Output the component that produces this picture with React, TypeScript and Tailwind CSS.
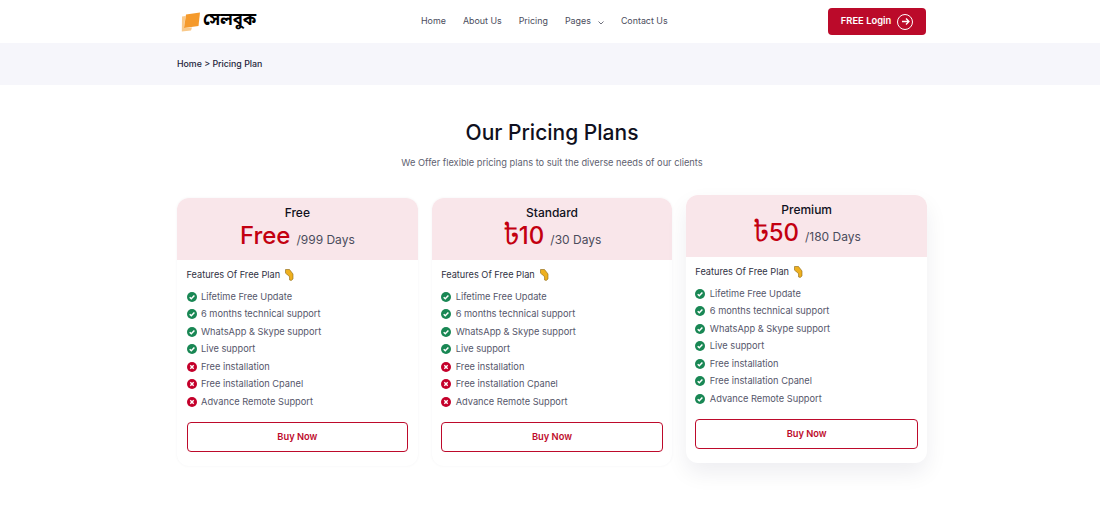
import React from "react";

const Check = ({ ok }: { ok: boolean }) => (
  <svg width="10" height="10" viewBox="0 0 10 10" className="shrink-0">
    <circle cx="5" cy="5" r="5" fill={ok ? "#198754" : "#c4002b"} />
    {ok ? (
      <path d="M2.7 5.2 4.3 6.8 7.4 3.6" fill="none" stroke="#fff" strokeWidth="1.5" />
    ) : (
      <path d="M3.3 3.3 6.7 6.7M6.7 3.3 3.3 6.7" fill="none" stroke="#fff" strokeWidth="1.4" />
    )}
  </svg>
);

const Hand = () => (
  <svg width="10" height="12" viewBox="0 0 10 12" className="ml-[4px]">
    <path d="M1.500.5H5.500L9 5V10L7.200 11.500 5.600 11 5.500 7.500 3.500 6 1.500 4Z" fill="#eeb01f" stroke="#8a6414" strokeWidth=".6" />
  </svg>
);

const names = [
  "Lifetime Free Update",
  "6 months technical support",
  "WhatsApp & Skype support",
  "Live support",
  "Free installation",
  "Free installation Cpanel",
  "Advance Remote Support",
];

const plans = [
  { name: "Free", taka: false, price: "Free", days: "/999 Days", ok: 4, extra: "", pad: "px-[9.500px]" },
  { name: "Standard", taka: true, price: "10", days: "/30 Days", ok: 4, extra: "", pad: "px-[9.500px]" },
  { name: "Premium", taka: true, price: "50", days: "/180 Days", ok: 7, extra: "-translate-y-[3px] shadow-[0_10px_22px_rgba(20,20,50,0.07)]", pad: "px-[9px]" },
];

export default function App() {
  return (
    <div className="min-h-[529px] bg-white font-['Inter',sans-serif] text-[#0f1020]">
      <header className="h-[43px] bg-white">
        <div className="ml-[177px] flex h-full w-[749px] items-center">
          <div className="flex w-[244px] items-center">
            <svg width="20" height="20" viewBox="0 0 20 20" className="ml-[4px] mt-[1px]">
              <path d="M1 4.500 4.500 4 3 16 11 15.500 10 18.500 0.800 19.500Z" fill="#f9c98a" />
              <path d="M5 2.500 19 .5 17.500 14 3 16Z" fill="#f59a2c" />
            </svg>
            <span className="ml-[2px] font-['Noto_Sans_Bengali','Noto_Sans',sans-serif] text-[16.500px] font-bold leading-none text-black">সেলবুক</span>
          </div>
          <nav className="flex items-center text-[8.900px] leading-none text-[#4b4c5c]">
            <span>Home</span>
            <span className="ml-[17px]">About Us</span>
            <span className="ml-[17px]">Pricing</span>
            <span className="ml-[17px]">Pages</span>
            <svg width="6" height="4" viewBox="0 0 6 4" className="ml-[7px] mt-[2px]">
              <path d="M.5.5 3 3 5.500.5" fill="none" stroke="#4b4c5c" strokeWidth=".8" />
            </svg>
            <span className="ml-[17px]">Contact Us</span>
          </nav>
          <button className="ml-auto flex h-[27px] w-[98px] items-center justify-center gap-[6px] rounded-[4px] bg-[#bb0a2a] text-[9.400px] font-semibold text-white">
            FREE Login
            <span className="flex h-[16px] w-[16px] items-center justify-center rounded-full border border-white">
              <svg width="9" height="9" viewBox="0 0 9 9">
                <path d="M1 4.500H8M5 1.500 8 4.500 5 7.500" fill="none" stroke="#fff" strokeWidth="1.300" />
              </svg>
            </span>
          </button>
        </div>
      </header>

      <div className="h-[42px] bg-[#f6f6fb]">
        <div className="ml-[177px] flex h-full items-center text-[8.800px] font-medium leading-none text-[#23243a]">
          Home &gt; Pricing Plan
        </div>
      </div>

      <main className="ml-[177px] w-[750px] pt-[35px]">
        <h1 className="text-center text-[21px] font-medium leading-[26px] text-[#0f1020]">Our Pricing Plans</h1>
        <p className="mt-[10px] text-center text-[9.250px] leading-[14px] text-[#60616f]">
          We Offer flexible pricing plans to suit the diverse needs of our clients
        </p>
        <div className="mt-[28px] grid grid-cols-3 gap-[14px]">
          {plans.map((p) => (
            <div key={p.name} className={`h-[268px] rounded-[12px] bg-white shadow-[0_0_3px_rgba(20,20,50,0.05)] ${p.extra}`}>
              <div className="flex h-[61.500px] flex-col items-center rounded-t-[12px] bg-[#f9e6ea] pt-[7px]">
                <div className="text-[12px] font-medium leading-[15px]">{p.name}</div>
                <div className="mt-[2px] flex h-[28px] items-baseline">
                  {p.taka && (
                    <span className="-mr-[1px] font-['Noto_Sans_Bengali','Noto_Sans',sans-serif] text-[29px] font-normal leading-[28px] text-[#c30010]">৳</span>
                  )}
                  <span className="text-[24px] font-medium leading-[28px] text-[#c30010]">{p.price}</span>
                  <span className="ml-[6px] text-[12px] text-[#4b4c5c]">{p.days}</span>
                </div>
              </div>
              <div className={p.pad}>
                <div className="mt-[8.500px] flex h-[14px] items-center text-[9.200px] text-[#303142]">
                  Features Of Free Plan <Hand />
                </div>
                <ul className="mt-[6px]">
                  {names.map((n, i) => (
                    <li key={n} className="flex h-[17.500px] items-center gap-[4.500px] text-[9.250px] text-[#55566a]">
                      <Check ok={i < p.ok} />
                      {n}
                    </li>
                  ))}
                </ul>
                <button className="mt-[11px] h-[30px] w-full rounded-[4px] border border-[#bd0a2b] text-[9.300px] font-semibold text-[#bd0a2b]">
                  Buy Now
                </button>
              </div>
            </div>
          ))}
        </div>
      </main>
    </div>
  );
}
